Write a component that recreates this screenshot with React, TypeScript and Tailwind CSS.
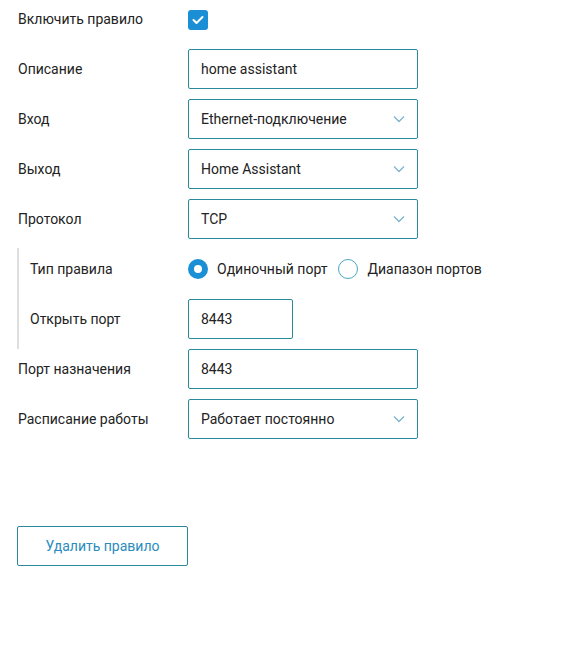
import React from "react";

const Chevron = () => (
  <svg width="12" height="8" viewBox="0 0 12 8" className="absolute right-[12px] top-1/2 -translate-y-1/2">
    <path d="M1 1.5 L6 6.5 L11 1.5" fill="none" stroke="#7db4cf" strokeWidth="1.3" />
  </svg>
);

const Box = ({ text, select, w = "w-[230px]" }: { text: string; select?: boolean; w?: string }) => (
  <div className={`relative ${w} h-[40px] border border-[#2b8a99] rounded-[2px] flex items-center pl-[12px] text-[14px] text-[#222]`}>
    {text}
    {select && <Chevron />}
  </div>
);

const Row = ({ label, children, lw = "w-[170px]" }: { label: string; children: React.ReactNode; lw?: string }) => (
  <div className="flex items-center h-[40px]">
    <div className={`${lw} shrink-0 text-[14px] text-[#222]`}>{label}</div>
    {children}
  </div>
);

export default function App() {
  return (
    <div className="w-[577px] h-[663px] bg-white pl-[18px]" style={{ fontFamily: "Roboto, 'Liberation Sans', sans-serif" }}>
      <div className="flex flex-col gap-[10px]">
        <div className="flex items-center h-[39px]">
          <div className="w-[170px] shrink-0 text-[14px] text-[#222]">Включить правило</div>
          <div className="w-[20px] h-[20px] rounded-[3px] bg-[#1b8fd5] flex items-center justify-center">
            <svg width="12" height="10" viewBox="0 0 12 10">
              <path d="M1.5 5 L4.5 8 L10.5 2" fill="none" stroke="white" strokeWidth="2" strokeLinecap="round" strokeLinejoin="round" />
            </svg>
          </div>
        </div>
        <Row label="Описание"><Box text="home assistant" /></Row>
        <Row label="Вход"><Box text="Ethernet-подключение" select /></Row>
        <Row label="Выход"><Box text="Home Assistant" select /></Row>
        <Row label="Протокол"><Box text="TCP" select /></Row>
        <div className="-ml-px border-l-2 border-[#dedede] pl-[11px] pb-[10px] -mb-[10px] -mt-px pt-px flex flex-col gap-[10px]">
          <Row label="Тип правила" lw="w-[158px]">
            <div className="flex items-center text-[14px] text-[#222]">
              <div className="w-[20px] h-[20px] rounded-full bg-[#1b8fd5] flex items-center justify-center">
                <div className="w-[8px] h-[8px] rounded-full bg-white" />
              </div>
              <span className="ml-[9px]">Одиночный порт</span>
              <div className="ml-[11px] w-[20px] h-[20px] rounded-full border border-[#4aa6c4]" />
              <span className="ml-[9px]">Диапазон портов</span>
            </div>
          </Row>
          <Row label="Открыть порт" lw="w-[158px]"><Box text="8443" w="w-[105px]" /></Row>
        </div>
        <Row label="Порт назначения"><Box text="8443" /></Row>
        <Row label="Расписание работы"><Box text="Работает постоянно" select /></Row>
      </div>
      <button className="mt-[87px] -ml-px w-[171px] h-[40px] border border-[#2b8a99] rounded-[2px] text-[14px] text-[#2a8cbd] bg-white">
        Удалить правило
      </button>
    </div>
  );
}
